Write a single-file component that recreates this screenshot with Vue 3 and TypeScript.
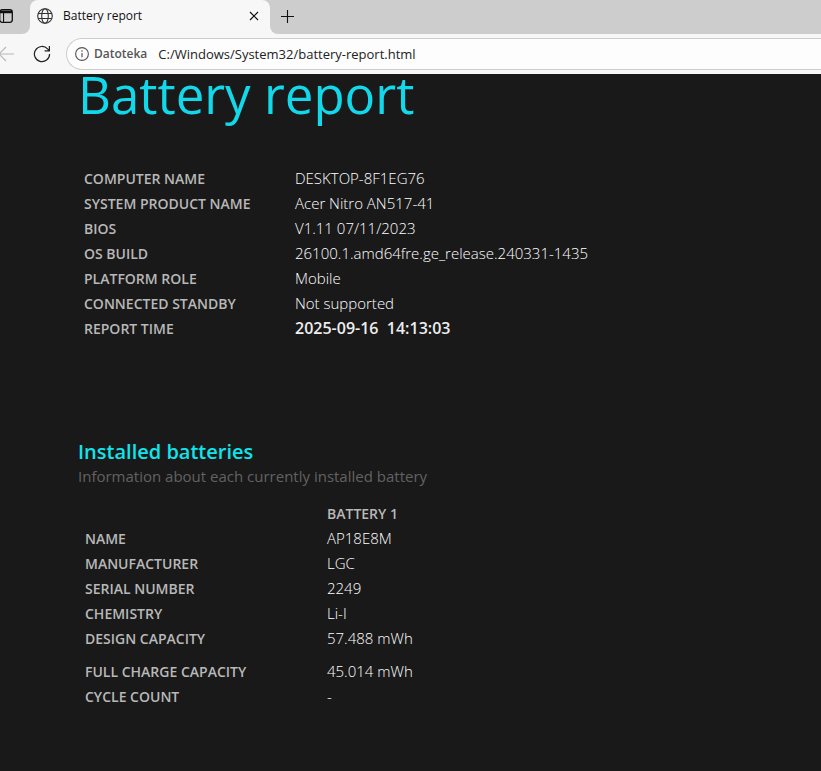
<script setup lang="ts">
interface Row {
  label: string
  value: string
  strong?: boolean
  gap?: boolean
}

const system: Row[] = [
  { label: 'COMPUTER NAME', value: 'DESKTOP-8F1EG76' },
  { label: 'SYSTEM PRODUCT NAME', value: 'Acer Nitro AN517-41' },
  { label: 'BIOS', value: 'V1.11 07/11/2023' },
  { label: 'OS BUILD', value: '26100.1.amd64fre.ge_release.240331-1435' },
  { label: 'PLATFORM ROLE', value: 'Mobile' },
  { label: 'CONNECTED STANDBY', value: 'Not supported' },
  { label: 'REPORT TIME', value: '2025-09-16\u00a0 14:13:03', strong: true },
]

const battery: Row[] = [
  { label: 'NAME', value: 'AP18E8M' },
  { label: 'MANUFACTURER', value: 'LGC' },
  { label: 'SERIAL NUMBER', value: '2249' },
  { label: 'CHEMISTRY', value: 'Li-I' },
  { label: 'DESIGN CAPACITY', value: '57.488 mWh' },
  { label: 'FULL CHARGE CAPACITY', value: '45.014 mWh', gap: true },
  { label: 'CYCLE COUNT', value: '-' },
]

const address = 'C:/Windows/System32/battery-report.html'
</script>

<template>
  <div class="browser">
    <header>
      <div class="strip">
        <div class="before">
          <button class="icon actions" type="button" aria-label="Tab actions">
            <svg width="14" height="14" viewBox="0 0 14 14">
              <rect x="0.7" y="0.7" width="12.6" height="12.6" rx="2.5" fill="none" stroke="#111" stroke-width="1.3" />
              <path d="M1 1.5h12v2.7H1zM4 4h1.1v9H4z" fill="#111" />
            </svg>
          </button>
        </div>
        <div class="tab">
          <svg class="globe" width="16" height="16" viewBox="0 0 16 16" fill="none" stroke="#333" stroke-width="1.1">
            <circle cx="8" cy="8" r="7.3" />
            <ellipse cx="8" cy="8" rx="3.3" ry="7.3" />
            <path d="M1.2 5.5h13.6M1.2 10.5h13.6" />
          </svg>
          <span class="tab-title">Battery report</span>
          <button class="icon" type="button" aria-label="Close tab">
            <svg width="10" height="10" viewBox="0 0 10 10"><path d="M1 1l8 8M9 1l-8 8" stroke="#111" stroke-width="1.2" /></svg>
          </button>
        </div>
        <div class="after">
          <button class="icon" type="button" aria-label="New tab">
            <svg width="15" height="15" viewBox="0 0 15 15"><path d="M7.5 1v13M1 7.5h13" stroke="#111" stroke-width="1.1" /></svg>
          </button>
        </div>
      </div>
      <div class="toolbar">
        <button class="icon back" type="button" aria-label="Back">
          <svg width="16" height="16" viewBox="0 0 16 16" fill="none" stroke="#b8b8b8" stroke-width="1.2"><path d="M16 8H1M8 1L1 8l7 7" /></svg>
        </button>
        <button class="icon" type="button" aria-label="Refresh">
          <svg width="18" height="18" viewBox="0 0 18 18" fill="none" stroke="#222" stroke-width="1.2">
            <path d="M16.6 9A7.6 7.6 0 1 1 14.6 3.9L16.4 5.7M16.4 1v4.8h-4.8" />
          </svg>
        </button>
        <div class="address">
          <svg width="14" height="14" viewBox="0 0 14 14">
            <circle cx="7" cy="7" r="6.4" fill="none" stroke="#555" stroke-width="1.1" />
            <path d="M7 6v4.3" stroke="#555" stroke-width="1.2" />
            <circle cx="7" cy="4" r=".8" fill="#555" />
          </svg>
          <label for="address">Datoteka</label>
          <input id="address" type="text" :value="address" />
        </div>
      </div>
    </header>

    <main>
      <h1>Battery report</h1>
      <table class="system">
        <tbody>
          <tr v-for="r in system" :key="r.label">
            <th scope="row">{{ r.label }}</th>
            <td :class="{ strong: r.strong }">{{ r.value }}</td>
          </tr>
        </tbody>
      </table>

      <h2>Installed batteries</h2>
      <p>Information about each currently installed battery</p>
      <table class="battery">
        <thead>
          <tr>
            <td></td>
            <th scope="col">BATTERY 1</th>
          </tr>
        </thead>
        <tbody>
          <tr v-for="r in battery" :key="r.label" :class="{ gap: r.gap }">
            <th scope="row">{{ r.label }}</th>
            <td>{{ r.value }}</td>
          </tr>
        </tbody>
      </table>
    </main>
  </div>
</template>

<style>
body {
  background: #191919;
}
</style>

<style scoped>
.browser {
  display: flex;
  flex-direction: column;
  min-height: 100vh;
  font-family: "Open Sans", "Noto Sans", sans-serif;
  background: #191919;
}

.icon {
  display: flex;
  padding: 0;
  border: 0;
  background: none;
}

.strip {
  display: flex;
  height: 34px;
  background: linear-gradient(#cdcdcd 50%, #f7f7f7 50%);
}

.before,
.after {
  display: flex;
  align-items: center;
  padding-bottom: 2px;
  box-sizing: border-box;
  background: #cdcdcd;
}

.before {
  width: 30px;
  border-bottom-right-radius: 8px;
}

.actions {
  margin-left: -1px;
}

.after {
  flex: 1;
  padding-left: 10px;
  border-bottom-left-radius: 8px;
}

.tab {
  display: flex;
  align-items: center;
  width: 240px;
  box-sizing: border-box;
  padding: 0 11px 2px 7px;
  background: #f7f7f7;
  border-radius: 8px 8px 0 0;
}

.tab-title {
  flex: 1;
  margin-left: 10px;
  font-size: 12px;
  line-height: 16px;
  color: #111;
}

.toolbar {
  display: flex;
  align-items: center;
  height: 40px;
  background: #f7f7f7;
}

.back {
  margin: 0 19px 0 -2px;
}

.address {
  display: flex;
  flex: 1;
  align-items: center;
  height: 30px;
  margin-left: 15px;
  padding-left: 8px;
  border: 1px solid #cdcdcd;
  border-right: 0;
  border-radius: 16px 0 0 16px;
  background: #fdfdfd;
}

.address label {
  margin: 0 11px 0 5px;
  font-size: 12px;
  font-weight: 600;
  line-height: 16px;
  color: #555;
}

.address input {
  flex: 1;
  min-width: 0;
  padding: 0;
  border: 0;
  outline: 0;
  background: none;
  font: 400 13px/20px "Open Sans", "Noto Sans", sans-serif;
  color: #222;
}

main {
  flex: 1;
  padding: 0 78px 24px;
}

h1 {
  margin: 0;
  font-size: 51px;
  font-weight: 400;
  line-height: 40px;
  color: #12d8ea;
}

table {
  border-collapse: collapse;
}

th,
td {
  height: 25px;
  padding: 0;
  line-height: 24px;
  text-align: left;
  vertical-align: baseline;
  white-space: nowrap;
}

th {
  font-size: 14px;
  font-weight: 600;
  color: #b8b8b8;
}

td {
  font-size: 15px;
  font-weight: 300;
  color: #fff;
}

td.strong {
  font-size: 16px;
  font-weight: 600;
  color: #eee;
}

.system {
  margin: 52px 0 0 6px;
}

.system th {
  width: 211px;
}

h2 {
  margin: 99px 0 0;
  font-size: 20px;
  font-weight: 600;
  line-height: 24px;
  color: #11e4ea;
}

p {
  margin: 0;
  font-size: 15px;
  font-weight: 400;
  line-height: 24px;
  color: #626262;
}

.battery {
  margin: 14px 0 0 7px;
}

.battery thead th,
.battery thead td {
  height: 24px;
}

.battery tbody th {
  width: 242px;
}

.battery .gap th,
.battery .gap td {
  height: 33px;
  padding-top: 8px;
  box-sizing: border-box;
}
</style>
